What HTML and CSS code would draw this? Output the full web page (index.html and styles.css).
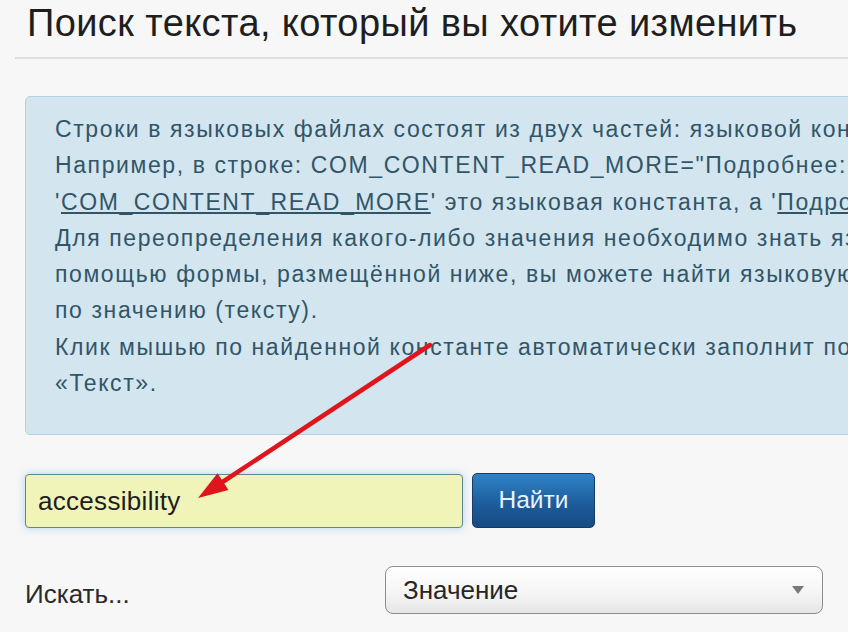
FILE: index.html
```html
<!DOCTYPE html>
<html lang="ru">
<head>
<meta charset="utf-8">
<title>Поиск текста</title>
<link rel="stylesheet" href="styles.css">
</head>
<body>
<div class="page">
  <h1 class="title">Поиск текста, который вы хотите изменить</h1>
  <div class="rule"></div>
  <div class="alert">
    <div class="line">Строки в языковых файлах состоят из двух частей: языковой константы</div>
    <div class="line">Например, в строке: COM_CONTENT_READ_MORE="Подробнее: "</div>
    <div class="line">'<span class="u">COM_CONTENT_READ_MORE</span>' это языковая константа, а '<span class="u">Подробнее</span>'</div>
    <div class="line">Для переопределения какого-либо значения необходимо знать языковую</div>
    <div class="line">помощью формы, размещённой ниже, вы можете найти языковую</div>
    <div class="line">по значению (тексту).</div>
    <div class="line">Клик мышью по найденной константе автоматически заполнит поля</div>
    <div class="line">«Текст».</div>
  </div>
  <div class="search-row">
    <div class="input">accessibility</div>
    <div class="btn">Найти</div>
  </div>
  <div class="filter-row">
    <div class="label">Искать...</div>
    <div class="select">
      <span class="select-text">Значение</span>
      <span class="caret"></span>
    </div>
  </div>
  <svg class="arrow" width="848" height="632" viewBox="0 0 848 632">
    <line x1="430" y1="345" x2="221" y2="483" stroke="#e0141c" stroke-width="4.5" stroke-linecap="round"/>
    <polygon points="198,498 217.5,473.2 228.5,489.9" fill="#e0141c"/>
  </svg>
</div>
</body>
</html>
```
FILE: styles.css
```css
html, body {
  margin: 0;
  padding: 0;
}
body {
  background: #f7f7f7;
  font-family: "Liberation Sans", Arial, sans-serif;
  overflow: hidden;
  width: 848px;
  height: 632px;
}
.page {
  position: relative;
  width: 848px;
  height: 632px;
  overflow: hidden;
}
.title {
  margin: 0;
  padding: 0 0 0 27px;
  font-weight: normal;
  font-size: 38px;
  letter-spacing: 0.4px;
  line-height: 46px;
  color: #1e1e1e;
  white-space: nowrap;
}
.rule {
  margin: 11px 0 0 15px;
  border-top: 2px solid #dedede;
}
.alert {
  margin: 37px 0 0 25px;
  width: 1000px;
  height: 339px;
  box-sizing: border-box;
  background: #d3e5ef;
  border: 1px solid #b3d2de;
  border-radius: 5px;
  padding: 14px 0 0 29px;
  color: #315567;
  font-size: 23px;
  letter-spacing: 1.6px;
  line-height: 36.25px;
}
.line {
  white-space: nowrap;
}
.u {
  text-decoration: underline;
}
.search-row {
  display: flex;
  align-items: flex-start;
  gap: 9px;
  margin: 38px 0 0 25px;
}
.input {
  width: 438px;
  height: 54px;
  box-sizing: border-box;
  background: #f1f4b9;
  border: 1px solid #5f878b;
  border-radius: 4px;
  box-shadow: 0 0 8px rgba(120, 180, 225, 0.55);
  padding-left: 12px;
  font-size: 26px;
  letter-spacing: 0.3px;
  line-height: 52px;
  color: #1d1d1d;
  margin-top: 1px;
}
.btn {
  width: 123px;
  height: 55px;
  box-sizing: border-box;
  background: linear-gradient(#2f82c8, #1c5a98 60%, #174b82);
  border: 1px solid #163c66;
  border-radius: 5px;
  color: #eaf3fb;
  font-size: 24.5px;
  line-height: 52px;
  text-align: center;
}
.filter-row {
  display: flex;
  align-items: center;
  margin: 38px 0 0 25px;
}
.label {
  width: 360px;
  font-size: 26px;
  color: #2a2a2a;
  padding-top: 8px;
}
.select {
  width: 438px;
  height: 48px;
  box-sizing: border-box;
  border: 1px solid #8d8d8d;
  border-radius: 8px;
  background: linear-gradient(#ffffff, #f4f4f4 60%, #e6e6e6);
  display: flex;
  align-items: center;
  justify-content: space-between;
  padding: 0 18px 0 17px;
}
.select-text {
  font-size: 26px;
  color: #262626;
}
.caret {
  width: 0;
  height: 0;
  border-left: 6px solid transparent;
  border-right: 6px solid transparent;
  border-top: 8px solid #7a7a7a;
}
.arrow {
  position: absolute;
  left: 0;
  top: 0;
  pointer-events: none;
}
```
